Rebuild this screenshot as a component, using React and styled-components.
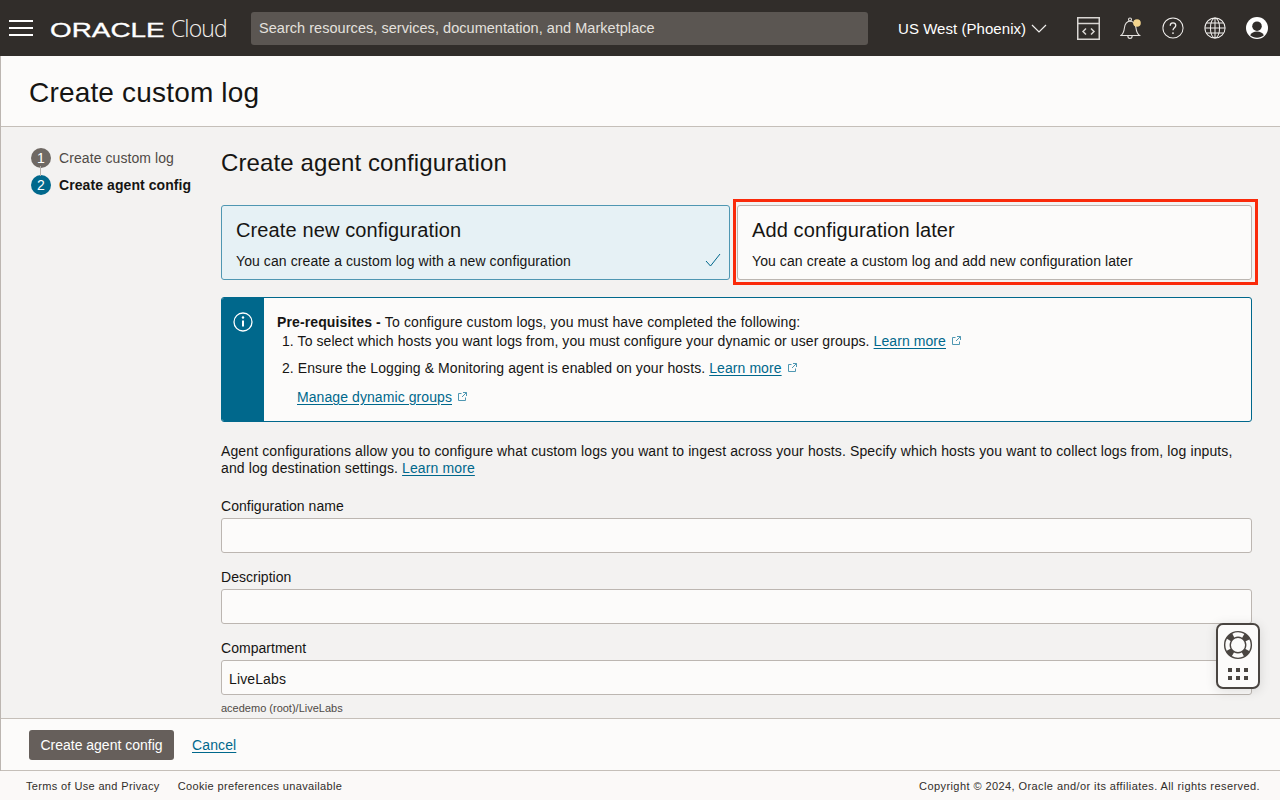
import React from 'react';
import styled, { createGlobalStyle } from 'styled-components';

const GlobalStyle = createGlobalStyle`
  html, body { margin: 0; padding: 0; height: 100%; overflow: hidden; }
  body { font-family: "Liberation Sans", Arial, sans-serif; color: #161513; font-size: 14px; letter-spacing: 0.12px; }
  * { box-sizing: border-box; }
`;

const Page = styled.div`
  position: relative;
  display: flex;
  flex-direction: column;
  width: 1280px;
  height: 800px;
  overflow: hidden;
  background: #fbf9f8;
`;

// Top bar
const TopBar = styled.header`
  flex: 0 0 56px;
  display: flex;
  align-items: center;
  background: #312d2a;
  color: #fff;
`;

const Burger = styled.div`
  display: flex;
  flex-direction: column;
  gap: 5px;
  margin-left: 9px;
  width: 24px;
  span { display: block; height: 2px; background: #fff; }
`;

const Logo = styled.div`
  display: flex;
  align-items: baseline;
  margin-left: 17px;
  width: 201px;
  white-space: nowrap;
`;

const LogoMark = styled.span`
  display: inline-block;
  width: 121px;
  font-size: 19.5px;
  letter-spacing: 0;
  color: #fff;
  -webkit-text-stroke: 0.3px #fff;
  transform: scaleX(1.43);
  transform-origin: left center;
`;

const LogoCloud = styled.span`
  font-size: 23px;
  font-family: "Open Sans", "Liberation Sans", sans-serif;
  font-weight: 300;
  letter-spacing: -0.9px;
  color: #f1efed;
`;

const SearchBox = styled.div`
  width: 617px;
  height: 33px;
  padding: 0 8px;
  display: flex;
  align-items: center;
  background: #5b5652;
  border-radius: 3px;
  color: #e4e1de;
  font-size: 14.5px;
  letter-spacing: 0.04px;
`;

const Region = styled.div`
  display: flex;
  align-items: center;
  gap: 5px;
  margin-left: 30px;
  width: 179px;
  font-size: 15px;
  letter-spacing: 0.05px;
  color: #fff;
`;

const IconRow = styled.div`
  display: flex;
  align-items: center;
  gap: 20px;
  svg { display: block; }
`;

// Page frame
const Frame = styled.div`
  flex: 1;
  min-height: 0;
  display: flex;
  flex-direction: column;
  border-left: 1px solid #bcb6b1;
`;

const TitleBar = styled.div`
  flex: 0 0 71px;
  display: flex;
  align-items: center;
  padding: 4px 0 0 28px;
  border-bottom: 1px solid #c5bfb9;
  background: #fcfbfa;
`;

const Title = styled.h1`
  margin: 0;
  font-size: 28px;
  font-weight: 400;
  letter-spacing: 0.18px;
  line-height: 34px;
`;

const Body = styled.div`
  flex: 1;
  min-height: 0;
  display: flex;
  overflow: hidden;
  background: #f3f2f1;
`;

const Steps = styled.nav`
  flex: 0 0 220px;
  padding: 17px 0 0 30px;
`;

const Step = styled.div`
  position: relative;
  display: flex;
  align-items: center;
  gap: 8px;
  height: 27px;
  font-size: 14px;
  letter-spacing: 0.08px;
  font-weight: ${(p) => (p.$active ? 700 : 400)};
  color: ${(p) => (p.$active ? '#161513' : '#4f4a46')};
`;

const StepDot = styled.span`
  flex: 0 0 20px;
  height: 20px;
  display: flex;
  align-items: center;
  justify-content: center;
  border-radius: 50%;
  font-size: 14px;
  font-weight: 400;
  color: #fff;
  background: ${(p) => (p.$active ? '#00688c' : '#6f6964')};
`;

const StepLine = styled.span`
  position: absolute;
  left: 9px;
  top: -5px;
  width: 1px;
  height: 10px;
  background: #b5afa9;
`;

const Content = styled.main`
  flex: 0 0 1031px;
  padding-top: 21px;
`;

const SectionTitle = styled.h2`
  margin: 0 0 28px;
  font-size: 24px;
  font-weight: 400;
  line-height: 29px;
`;

const CardRow = styled.div`
  display: grid;
  grid-template-columns: 509px 515px;
  column-gap: 7px;
`;

const Card = styled.div`
  position: relative;
  height: 75px;
  padding: 12px 14px 0;
  border-radius: 3px;
  border: 1px solid ${(p) => (p.$selected ? '#4f97b2' : '#bcb6b1')};
  background: ${(p) => (p.$selected ? '#e6f1f5' : '#fcfbfa')};
`;

const CardTitle = styled.div`
  font-size: 20px;
  line-height: 24px;
`;

const CardText = styled.div`
  margin-top: 10px;
  font-size: 14px;
  letter-spacing: 0.09px;
  line-height: 18px;
`;

const CheckMark = styled.svg`
  position: absolute;
  right: 8px;
  bottom: 12px;
`;

const Highlight = styled.div`
  position: absolute;
  top: -7px;
  left: -5px;
  right: -7px;
  bottom: -6px;
  border: 3px solid #fa2a0a;
  pointer-events: none;
`;

const InfoBox = styled.div`
  display: flex;
  height: 125px;
  margin-top: 17px;
  border: 1px solid #00688c;
  border-radius: 3px;
  background: #fcfbfa;
  overflow: hidden;
`;

const InfoBand = styled.div`
  flex: 0 0 42px;
  padding: 14px 0 0 11px;
  background: #00688c;
`;

const InfoBody = styled.div`
  padding: 15px 0 0 13px;
  font-size: 14px;
  line-height: 18px;
`;

const InfoLead = styled.div`
  margin-bottom: 1px;
`;

const InfoItem = styled.div`
  padding-left: ${(p) => (p.$plain ? '20px' : '5px')};
  margin-top: ${(p) => p.$gap || 0}px;
  letter-spacing: 0.08px;
`;

const Link = styled.a`
  color: #00688c;
  text-decoration: underline;
  text-underline-offset: 2px;
`;

const ExternalIcon = styled.svg`
  margin-left: 5px;
  vertical-align: 0;
`;

const Intro = styled.p`
  margin: 21px 0 0;
  font-size: 14px;
  line-height: 17px;
`;

const FieldLabel = styled.label`
  display: block;
  margin-top: ${(p) => p.$gap}px;
  margin-bottom: 3px;
  font-size: 14px;
  letter-spacing: 0.03px;
  line-height: 18px;
`;

const TextInput = styled.div`
  height: 35px;
  padding: 3px 7px 0;
  display: flex;
  align-items: center;
  border: 1px solid #bcb6b1;
  border-radius: 3px;
  background: #fcfbfa;
  font-size: 14px;
`;

const Hint = styled.div`
  margin-top: 6px;
  font-size: 11px;
  letter-spacing: 0;
  line-height: 14px;
  color: #4f4a46;
`;

// Bottom bars
const ActionBar = styled.div`
  flex: 0 0 53px;
  display: flex;
  align-items: center;
  gap: 18px;
  padding-left: 28px;
  border-top: 1px solid #c5bfb9;
  border-bottom: 1px solid #c5bfb9;
  background: #fcfbfa;
`;

const PrimaryButton = styled.button`
  width: 145px;
  height: 30px;
  padding: 0;
  border: 0;
  border-radius: 3px;
  background: #665f5b;
  color: #fff;
  font: 14px "Liberation Sans", Arial, sans-serif;
`;

const Footer = styled.footer`
  flex: 0 0 29px;
  display: flex;
  align-items: center;
  justify-content: space-between;
  padding: 0 20px 0 26px;
  background: #fbf9f8;
  font-size: 11px;
  letter-spacing: 0.35px;
  color: #312d2a;
`;

const FooterLinks = styled.div`
  display: flex;
  gap: 18px;
`;

const Copyright = styled.span`
  letter-spacing: 0.42px;
`;

// Floating help widget
const HelpWidget = styled.div`
  position: absolute;
  left: 1216px;
  top: 623px;
  width: 44px;
  height: 66px;
  display: flex;
  flex-direction: column;
  align-items: center;
  padding-top: 5px;
  gap: 8px;
  border: 2px solid #4a4541;
  border-radius: 7px;
  background: #fcfbfa;
  box-shadow: 0 2px 12px rgba(0, 0, 0, 0.12);
`;

const External = () => (
  <ExternalIcon width="11" height="11" viewBox="0 0 11 11" fill="none" stroke="#4f97b2" strokeWidth="1">
    <path d="M8.5 6.5v3h-7v-7h3M6 1.5h3.5V5M9.5 1.5 5 6" />
  </ExternalIcon>
);

const CodeIcon = () => (
  <svg width="23" height="23" viewBox="0 0 23 23" fill="none" stroke="#d9d6d3" strokeWidth="1.500">
    <rect x="0.750" y="0.750" width="21.500" height="21.500" />
    <path d="M0.750 6.500h21.500M9 11.500 6 14.500l3 3M14 11.500l3 3-3 3" />
  </svg>
);

const BellIcon = () => (
  <svg width="22" height="24" viewBox="0 0 22 24" fill="none" stroke="#e4e1de" strokeWidth="1.100">
    <path d="M1 19.500c2.500-2 3-4 3.400-7.500.4-4 2.300-6.500 5.600-7 3.600.4 5.500 3 6 7 .4 3.500 1 5.500 3.500 7.500z" />
    <circle cx="10" cy="3.500" r="1.500" />
    <path d="M7.800 19.500c0 2 1 3 2.200 3s2.200-1 2.200-3" />
    <circle cx="17" cy="7" r="3.800" fill="#f4d58d" stroke="none" />
  </svg>
);

const HelpIcon = () => (
  <svg width="22" height="22" viewBox="0 0 24 24" fill="none" stroke="#f1efed" strokeWidth="1.100">
    <circle cx="12" cy="12" r="11" />
    <path d="M9 9.500c0-1.800 1.300-3 3-3s3 1.200 3 2.800c0 2.500-3 2.500-3 5.200" strokeWidth="1.400" />
    <circle cx="12" cy="17.500" r="1" fill="#f1efed" stroke="none" />
  </svg>
);

const GlobeIcon = () => (
  <svg width="22" height="22" viewBox="0 0 24 24" fill="none" stroke="#f1efed" strokeWidth="1.100">
    <circle cx="12" cy="12" r="11" />
    <ellipse cx="12" cy="12" rx="5" ry="11" />
    <path d="M12 1v22M1 12h22M2.500 6.500h19M2.500 17.500h19" />
  </svg>
);

const AvatarIcon = () => (
  <svg width="22" height="22" viewBox="0 0 24 24">
    <circle cx="12" cy="12" r="12" fill="#fff" />
    <circle cx="12" cy="10" r="5.200" fill="#312d2a" />
    <path d="M4.500 20c1.500-3 4-4.200 7.500-4.200s6 1.200 7.500 4.200c-2 1.700-4.500 2.600-7.500 2.600S6.500 21.700 4.500 20z" fill="#312d2a" />
  </svg>
);

const LifeRing = () => (
  <svg width="30" height="30" viewBox="0 0 32 32" fill="none">
    <circle cx="16" cy="16" r="11.250" stroke="#4a4541" strokeWidth="7.500" />
    <circle cx="16" cy="16" r="11.250" stroke="#fcfbfa" strokeWidth="4.500" strokeDasharray="11 6.670" strokeDashoffset="5.500" />
  </svg>
);

const GridDots = () => (
  <svg width="20" height="12" viewBox="0 0 20 12" fill="#4a4541">
    {[0, 8, 16].map((x) => [0, 8].map((y) => <rect key={`${x}-${y}`} x={x} y={y} width="4" height="4" />))}
  </svg>
);

export default function App() {
  return (
    <Page>
      <GlobalStyle />
      <TopBar>
        <Burger><span /><span /><span /></Burger>
        <Logo>
          <LogoMark>ORACLE</LogoMark>
          <LogoCloud>Cloud</LogoCloud>
        </Logo>
        <SearchBox>Search resources, services, documentation, and Marketplace</SearchBox>
        <Region>
          US West (Phoenix)
          <svg width="16" height="9" viewBox="0 0 16 9" fill="none" stroke="#f1efed" strokeWidth="1.200">
            <path d="M1 1l7 7 7-7" />
          </svg>
        </Region>
        <IconRow>
          <CodeIcon />
          <BellIcon />
          <HelpIcon />
          <GlobeIcon />
          <AvatarIcon />
        </IconRow>
      </TopBar>

      <Frame>
        <TitleBar><Title>Create custom log</Title></TitleBar>
        <Body>
          <Steps>
            <Step><StepDot>1</StepDot>Create custom log</Step>
            <Step $active><StepLine /><StepDot $active>2</StepDot>Create agent config</Step>
          </Steps>
          <Content>
            <SectionTitle>Create agent configuration</SectionTitle>
            <CardRow>
              <Card $selected>
                <CardTitle>Create new configuration</CardTitle>
                <CardText>You can create a custom log with a new configuration</CardText>
                <CheckMark width="16" height="14" viewBox="0 0 16 14" fill="none" stroke="#00688c" strokeWidth="1">
                  <path d="M1 8l4.500 5L15 1" />
                </CheckMark>
              </Card>
              <Card>
                <CardTitle>Add configuration later</CardTitle>
                <CardText>You can create a custom log and add new configuration later</CardText>
                <Highlight />
              </Card>
            </CardRow>
            <InfoBox>
              <InfoBand>
                <svg width="20" height="20" viewBox="0 0 20 20" fill="none" stroke="#fff" strokeWidth="1.300">
                  <circle cx="10" cy="10" r="9" />
                  <path d="M10 8.500v6" strokeWidth="2" />
                  <circle cx="10" cy="5.500" r="1.200" fill="#fff" stroke="none" />
                </svg>
              </InfoBand>
              <InfoBody>
                <InfoLead><strong>Pre-requisites - </strong>To configure custom logs, you must have completed the following:</InfoLead>
                <InfoItem>1. To select which hosts you want logs from, you must configure your dynamic or user groups. <Link>Learn more</Link><External /></InfoItem>
                <InfoItem $gap={9}>2. Ensure the Logging &amp; Monitoring agent is enabled on your hosts. <Link>Learn more</Link><External /></InfoItem>
                <InfoItem $plain $gap={11}><Link>Manage dynamic groups</Link><External /></InfoItem>
              </InfoBody>
            </InfoBox>
            <Intro>
              Agent configurations allow you to configure what custom logs you want to ingest across your hosts. Specify which hosts you want to collect logs from, log inputs, and log destination settings. <Link>Learn more</Link>
            </Intro>
            <FieldLabel $gap={20}>Configuration name</FieldLabel>
            <TextInput />
            <FieldLabel $gap={15}>Description</FieldLabel>
            <TextInput />
            <FieldLabel $gap={15}>Compartment</FieldLabel>
            <TextInput>LiveLabs</TextInput>
            <Hint>acedemo (root)/LiveLabs</Hint>
          </Content>
        </Body>
        <ActionBar>
          <PrimaryButton>Create agent config</PrimaryButton>
          <Link>Cancel</Link>
        </ActionBar>
      </Frame>

      <Footer>
        <FooterLinks>
          <span>Terms of Use and Privacy</span>
          <span>Cookie preferences unavailable</span>
        </FooterLinks>
        <Copyright>Copyright © 2024, Oracle and/or its affiliates. All rights reserved.</Copyright>
      </Footer>

      <HelpWidget>
        <LifeRing />
        <GridDots />
      </HelpWidget>
    </Page>
  );
}
